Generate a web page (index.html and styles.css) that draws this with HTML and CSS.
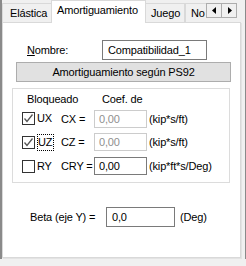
FILE: index.html
```html
<!DOCTYPE html>
<html>
<head>
  <title>Amortiguamiento</title>
  <link rel="stylesheet" href="styles.css">
</head>
<body>
  <div class="frame">
    <div class="tabs">
      <div class="tab tab-elastica">Elástica</div>
      <div class="tab active">Amortiguamiento</div>
      <div class="tab tab-juego">Juego</div>
      <div class="tab tab-no">No</div>
      <div class="scroller">
        <div class="arrow"><svg width="5" height="7" viewBox="0 0 5 7"><path d="M4 0 L0 3.5 L4 7 Z" fill="#000"/></svg></div>
        <div class="arrow"><svg width="5" height="7" viewBox="0 0 5 7"><path d="M1 0 L5 3.5 L1 7 Z" fill="#000"/></svg></div>
      </div>
    </div>

    <div class="page">
      <div class="name-row">
        <span class="name-label"><u>N</u>ombre:</span>
        <div class="field name-field">Compatibilidad_1</div>
      </div>

      <div class="button">Amortiguamiento según PS92</div>

      <div class="group">
        <div class="head">
          <span class="head-lock">Bloqueado</span>
          <span>Coef. de</span>
        </div>

        <div class="grow">
          <span class="check checked"><svg width="11" height="11" viewBox="0 0 11 11"><path d="M1.5 5.5 L4 8.5 L9.5 1.5" fill="none" stroke="#555" stroke-width="1.3"/></svg></span>
          <span class="dof">UX</span>
          <span class="coef">CX =</span>
          <div class="field small disabled">0,00</div>
          <span class="unit">(kip*s/ft)</span>
        </div>

        <div class="grow row-mid">
          <span class="check checked"><svg width="11" height="11" viewBox="0 0 11 11"><path d="M1.5 5.5 L4 8.5 L9.5 1.5" fill="none" stroke="#555" stroke-width="1.3"/></svg></span>
          <span class="dof"><span class="focus">UZ</span></span>
          <span class="coef">CZ =</span>
          <div class="field small disabled">0,00</div>
          <span class="unit">(kip*s/ft)</span>
        </div>

        <div class="grow row-mid">
          <span class="check"></span>
          <span class="dof">RY</span>
          <span class="coef">CRY =</span>
          <div class="field small">0,00</div>
          <span class="unit">(kip*ft*s/Deg)</span>
        </div>
      </div>

      <div class="beta-row">
        <span class="beta-label">Beta (eje Y) =</span>
        <div class="field beta-field">0,0</div>
        <span class="beta-unit">(Deg)</span>
      </div>
    </div>
  </div>
</body>
</html>
```

FILE: styles.css
```css
* {
  box-sizing: border-box;
}

body {
  margin: 0;
  padding: 0;
  width: 246px;
  height: 266px;
  overflow: hidden;
  background-color: #f0f0f0;
  font-family: "Liberation Sans", Arial, sans-serif;
  font-size: 11px;
  letter-spacing: -0.15px;
  color: #000;
}

.frame {
  width: 246px;
  height: 259px;
  border-left: 2px solid #8a8a8a;
  border-right: 1px solid #8a8a8a;
  padding-right: 3px;
}

/* tab strip */
.tabs {
  display: flex;
  align-items: flex-end;
  height: 22px;
}

.tab {
  height: 19px;
  border: 1px solid #d9d9d9;
  border-bottom: none;
  background-color: #f0f0f0;
  padding-top: 3px;
  padding-left: 7px;
  white-space: nowrap;
  overflow: hidden;
}

.tab-elastica {
  width: 50px;
}

.tab.active {
  position: relative;
  z-index: 1;
  width: 95px;
  height: 23px;
  margin: 0 -1px -1px -1px;
  padding-top: 3px;
  padding-left: 5px;
  background-color: #fff;
}

.tab-juego {
  width: 40px;
  padding-left: 5px;
}

.tab-no {
  width: 21px;
  padding-left: 5px;
  border-right: none;
}

.scroller {
  display: flex;
  align-self: flex-start;
  margin-top: 3px;
}

.arrow {
  display: flex;
  align-items: center;
  justify-content: center;
  width: 16px;
  height: 15px;
  border: 1px solid #adadad;
  background-color: #f0f0f0;
}

.arrow + .arrow {
  margin-left: -1px;
}

/* page */
.page {
  height: 236px;
  width: 239px;
  background-color: #fff;
  border: 1px solid #d9d9d9;
  box-shadow: 1px 1px 0 #e3e3e3;
  padding-top: 17px;
}

.field {
  height: 20px;
  border: 1px solid #7a7a7a;
  background-color: #fff;
  line-height: 18px;
  padding-left: 5px;
  white-space: nowrap;
}

.field.small {
  width: 53px;
  height: 18px;
  line-height: 16px;
  padding-left: 4px;
}

.field.disabled {
  border-color: #cccccc;
  color: #8f8f8f;
}

.name-row {
  display: flex;
  align-items: center;
  padding-left: 24px;
}

.name-label {
  width: 75px;
}

.name-field {
  width: 105px;
}

.button {
  margin: 2px 0 0 13px;
  width: 215px;
  height: 20px;
  border: 1px solid #adadad;
  background-color: #e1e1e1;
  text-align: center;
  line-height: 18px;
}

/* group box */
.group {
  margin: 6px 0 0 9px;
  width: 218px;
  height: 95px;
  border: 1px solid #dcdcdc;
  padding-top: 3px;
}

.head {
  display: flex;
  height: 15px;
  line-height: 15px;
  padding-left: 14px;
}

.head-lock {
  width: 75px;
}

.grow {
  display: flex;
  align-items: center;
  height: 23px;
  padding-left: 9px;
}

.row-mid {
  height: 24px;
}

.check {
  display: flex;
  align-items: center;
  justify-content: center;
  width: 13px;
  height: 13px;
  border: 1px solid #333;
  background-color: #fff;
}

.dof {
  width: 20px;
  margin-left: 2px;
  line-height: 15px;
}

.dof .focus {
  display: inline-block;
  border: 1px dotted #000;
  padding: 0 1px 0 0;
}

.coef {
  width: 33px;
  margin-left: 4px;
}

.unit {
  margin-left: 2px;
}

/* beta */
.beta-row {
  display: flex;
  align-items: center;
  margin-top: 24px;
  padding-left: 27px;
}

.beta-label {
  width: 76px;
}

.beta-field {
  width: 69px;
}

.beta-unit {
  margin-left: 5px;
}
```
